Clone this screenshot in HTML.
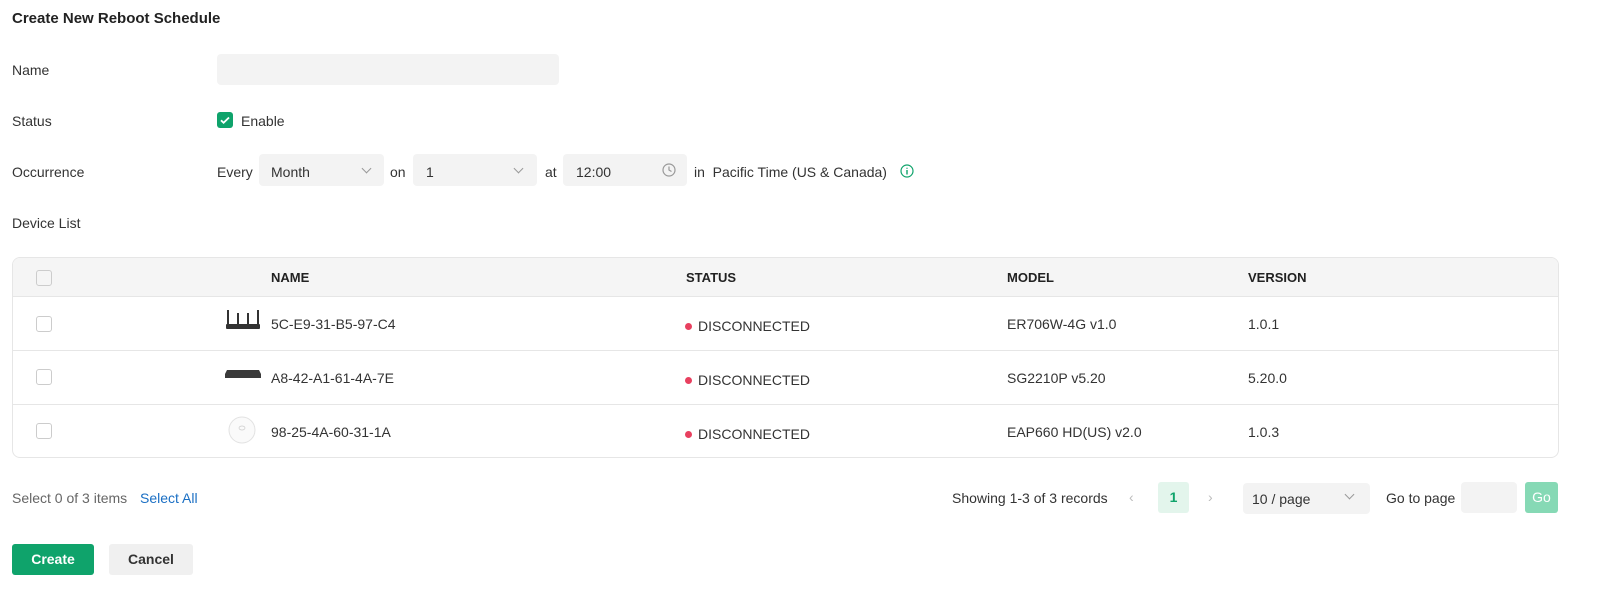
<!DOCTYPE html>
<html><head><style>
*{box-sizing:border-box;margin:0;padding:0}
body{width:1605px;height:595px;background:#fff;font-family:"Liberation Sans",Arial,sans-serif;font-size:14px;color:#333;position:relative;overflow:hidden}
.a{position:absolute}
.in{position:absolute;background:#f3f3f3;border-radius:4px}
.chev{position:absolute;width:7px;height:7px;border-right:1.3px solid #999;border-bottom:1.3px solid #999;transform:rotate(45deg)}
.cb{position:absolute;width:16px;height:16px;border:1px solid #ccc;border-radius:3px;background:#fff}
.hr{position:absolute;left:13px;width:1545px;height:1px;background:#e6e6e6}
.th{position:absolute;top:270px;font-weight:bold;font-size:13px;color:#222}
.dot{display:inline-block;width:7px;height:7px;border-radius:50%;background:#e8405f;margin-right:6px;vertical-align:1px}
</style></head><body>
<div class="a" style="left:12px;top:10px;font-weight:bold;font-size:15px;color:#222">Create New Reboot Schedule</div>
<div class="a" style="left:12px;top:62px">Name</div>
<div class="in" style="left:217px;top:54px;width:342px;height:31px"></div>
<div class="a" style="left:12px;top:113px">Status</div>
<div class="a" style="left:217px;top:112px;width:16px;height:16px;background:#0fa36b;border-radius:3px"><svg width="16" height="16"><path d="M4 8.3l2.6 2.5L12 5.5" stroke="#fff" stroke-width="1.8" fill="none"/></svg></div>
<div class="a" style="left:241px;top:113px">Enable</div>
<div class="a" style="left:12px;top:164px">Occurrence</div>
<div class="a" style="left:217px;top:164px">Every</div>
<div class="in" style="left:259px;top:154px;width:125px;height:32px"></div>
<div class="a" style="left:271px;top:164px">Month</div><div class="chev" style="left:363px;top:165px"></div>
<div class="a" style="left:390px;top:164px">on</div>
<div class="in" style="left:413px;top:154px;width:124px;height:32px"></div>
<div class="a" style="left:426px;top:164px">1</div><div class="chev" style="left:515px;top:165px"></div>
<div class="a" style="left:545px;top:164px">at</div>
<div class="in" style="left:563px;top:154px;width:124px;height:32px"></div>
<div class="a" style="left:576px;top:164px">12:00</div>
<svg class="a" style="left:662px;top:163px" width="14" height="14"><circle cx="7" cy="7" r="6" stroke="#999" fill="none" stroke-width="1.2"/><path d="M7 3.5V7l2.5 1.5" stroke="#999" fill="none" stroke-width="1.2"/></svg>
<div class="a" style="left:694px;top:164px">in&nbsp; Pacific Time (US &amp; Canada)</div>
<svg class="a" style="left:900px;top:164px" width="14" height="14"><circle cx="7" cy="7" r="6" stroke="#0fa36b" fill="none" stroke-width="1.2"/><path d="M7 6v4.5M7 3.7v1" stroke="#0fa36b" stroke-width="1.4"/></svg>
<div class="a" style="left:12px;top:215px">Device List</div>
<div class="a" style="left:12px;top:257px;width:1547px;height:201px;border:1px solid #e6e6e6;border-radius:8px;overflow:hidden"><div style="height:39px;background:#f5f5f5;border-bottom:1px solid #e6e6e6"></div></div>
<div class="hr" style="top:350px"></div><div class="hr" style="top:404px"></div>
<div class="cb" style="left:36px;top:270px;background:#f5f5f5"></div>
<div class="th" style="left:271px">NAME</div><div class="th" style="left:686px">STATUS</div><div class="th" style="left:1007px">MODEL</div><div class="th" style="left:1248px">VERSION</div>
<div class="cb" style="left:36px;top:316px"></div><div class="cb" style="left:36px;top:369px"></div><div class="cb" style="left:36px;top:423px"></div>
<svg class="a" style="left:225px;top:309px" width="36" height="22"><g fill="#333"><rect x="2" y="1" width="2" height="16"/><rect x="12" y="4" width="2" height="13"/><rect x="22" y="4" width="2" height="13"/><rect x="32" y="1" width="2" height="16"/><rect x="1" y="15" width="34" height="5" rx="1"/></g></svg>
<svg class="a" style="left:224px;top:369px" width="38" height="12"><path d="M3 1h32l2 4v4H1V5z" fill="#3a3a3a"/></svg>
<svg class="a" style="left:227px;top:415px" width="30" height="30"><circle cx="15" cy="15" r="13" fill="#fafafa" stroke="#e2e2e2"/><ellipse cx="15" cy="13" rx="3" ry="2" fill="none" stroke="#ccc" stroke-width=".7"/></svg>
<div class="a" style="left:271px;top:316px">5C-E9-31-B5-97-C4</div>
<div class="a" style="left:271px;top:370px">A8-42-A1-61-4A-7E</div>
<div class="a" style="left:271px;top:424px">98-25-4A-60-31-1A</div>
<div class="a" style="left:685px;top:318px"><span class="dot"></span>DISCONNECTED</div>
<div class="a" style="left:685px;top:372px"><span class="dot"></span>DISCONNECTED</div>
<div class="a" style="left:685px;top:426px"><span class="dot"></span>DISCONNECTED</div>
<div class="a" style="left:1007px;top:316px">ER706W-4G v1.0</div>
<div class="a" style="left:1007px;top:370px">SG2210P v5.20</div>
<div class="a" style="left:1007px;top:424px">EAP660 HD(US) v2.0</div>
<div class="a" style="left:1248px;top:316px">1.0.1</div>
<div class="a" style="left:1248px;top:370px">5.20.0</div>
<div class="a" style="left:1248px;top:424px">1.0.3</div>
<div class="a" style="left:12px;top:490px;color:#666">Select 0 of 3 items</div>
<div class="a" style="left:140px;top:490px;color:#1a6fc4">Select All</div>
<div class="a" style="left:952px;top:490px">Showing 1-3 of 3 records</div>
<div class="a" style="left:1129px;top:489px;color:#bbb">&lsaquo;</div>
<div class="a" style="left:1158px;top:482px;width:31px;height:31px;background:#e3f5ec;border-radius:3px;color:#0fa36b;font-weight:bold;text-align:center;line-height:31px">1</div>
<div class="a" style="left:1208px;top:489px;color:#bbb">&rsaquo;</div>
<div class="in" style="left:1243px;top:483px;width:127px;height:31px"></div>
<div class="a" style="left:1252px;top:491px">10 / page</div><div class="chev" style="left:1346px;top:491px"></div>
<div class="a" style="left:1386px;top:490px">Go to page</div>
<div class="in" style="left:1461px;top:482px;width:56px;height:31px"></div>
<div class="a" style="left:1525px;top:482px;width:33px;height:31px;background:#86d9b5;border-radius:3px;color:#fff;text-align:center;line-height:31px">Go</div>
<div class="a" style="left:12px;top:544px;width:82px;height:31px;background:#0fa36b;border-radius:3px;color:#fff;font-weight:bold;text-align:center;line-height:31px">Create</div>
<div class="a" style="left:109px;top:544px;width:84px;height:31px;background:#f0f0f0;border-radius:3px;color:#333;font-weight:bold;text-align:center;line-height:31px">Cancel</div>
</body></html>
